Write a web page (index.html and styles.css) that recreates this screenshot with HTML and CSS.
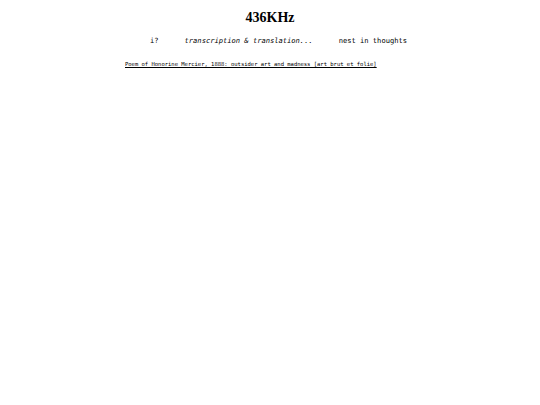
FILE: index.html
```html
<!DOCTYPE html>
<html>
<head>
<meta charset="utf-8">
<link rel="stylesheet" href="styles.css">
</head>
<body>
<h1 class="title">436KHz</h1>
<nav class="nav">
  <span class="nav-item">i?</span>
  <em class="nav-item">transcription &amp; translation...</em>
  <span class="nav-item">nest in thoughts</span>
</nav>
<div class="posts">
  <a class="post-link" href="#">Poem of Honorine Mercier, 1888: outsider art and madness [art brut et folie]</a>
</div>
</body>
</html>
```
FILE: styles.css
```css
html, body {
  margin: 0;
  padding: 0;
  background: #fff;
  color: #000;
}
.title {
  margin: 0;
  padding-top: 10px;
  text-align: center;
  font-family: "Liberation Serif", serif;
  font-weight: bold;
  font-size: 14px;
  line-height: 16px;
}
.nav {
  display: flex;
  gap: 26px;
  padding-left: 150px;
  margin-top: 10px;
  font-family: "DejaVu Sans Mono", monospace;
  font-size: 7.1px;
  line-height: 10px;
}
.nav-item {
  white-space: pre;
}
.posts {
  padding-left: 125px;
  margin-top: 6px;
}
.post-link {
  color: #000;
  font-family: "DejaVu Sans Mono", monospace;
  font-size: 5.5px;
  line-height: 8px;
}
```
